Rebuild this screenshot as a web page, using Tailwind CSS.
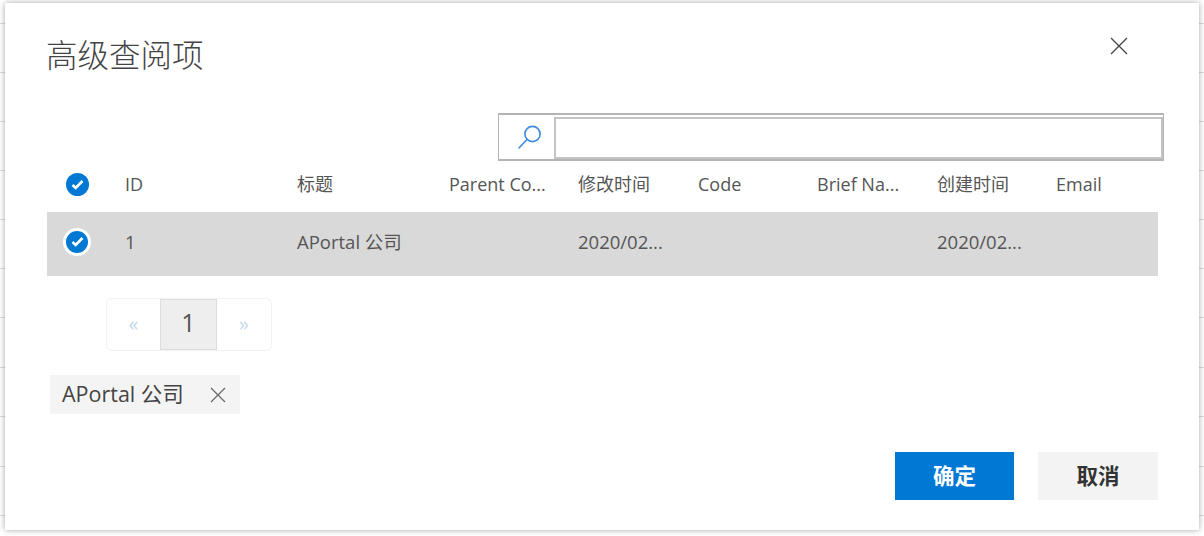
<!DOCTYPE html>
<html lang="zh-CN">
<head>
    <meta charset="UTF-8">
    <meta name="viewport" content="width=device-width, initial-scale=1.0">
    <title>高级查阅项</title>
    <script src="https://cdn.jsdelivr.net/npm/@tailwindcss/browser@4"></script>
</head>
<body class="relative w-[1204px] h-[536px] overflow-hidden bg-white font-['Open_Sans','Noto_Sans_CJK_SC',sans-serif] text-[#333]">
    <!-- Page behind the dialog -->
    <div class="pt-[23px]">
        <div class="h-[49px] border-t border-[#ddd]"></div>
        <div class="h-[49px] border-t border-[#ddd]"></div>
        <div class="h-[49px] border-t border-[#ddd]"></div>
        <div class="h-[49px] border-t border-[#ddd]"></div>
        <div class="h-[49px] border-t border-[#ddd]"></div>
        <div class="h-[49px] border-t border-[#ddd]"></div>
        <div class="h-[50px] border-t border-[#ddd]"></div>
        <div class="h-[49px] border-t border-[#ddd]"></div>
        <div class="h-[50px] border-t border-[#ddd]"></div>
        <div class="h-[49px] border-t border-[#ddd]"></div>
        <div class="h-[21px] border-t border-[#ddd]"></div>
    </div>

    <!-- Dialog -->
    <div class="absolute left-[5px] top-[3px] w-[1194px] h-[527px] bg-white shadow-[0_0_6px_rgba(0,0,0,0.35)] pl-[42px] pr-[41px]">
        <div class="flex justify-between h-[110px]">
            <h2 class="pt-[29px] -ml-[1px] text-[31.5px] leading-[46px] font-light text-[#444]">高级查阅项</h2>
            <button class="mt-[34px] mr-[30px] h-[18px] w-[18px] text-[#444]">
                <svg class="w-[18px] h-[18px]" viewBox="0 0 18 18" fill="none" stroke="currentColor" stroke-width="1.3"><path d="M1 1l16 16M17 1L1 17"/></svg>
            </button>
        </div>

        <!-- Search -->
        <div class="flex justify-end -mr-[6px]">
            <div class="flex w-[666px] h-[48px] border-x border-t-2 border-b-2 border-[#b4b4b4]">
                <div class="w-[55px] flex items-center justify-center pl-[7px] text-[#3c8ae0]">
                    <svg class="w-[26px] h-[26px]" viewBox="0 0 26 26" fill="none" stroke="currentColor" stroke-width="1.6"><circle cx="15.5" cy="10" r="7.6"/><path d="M10 15.5L2 24" stroke-linecap="round"/></svg>
                </div>
                <input type="text" class="flex-1 min-w-0 mt-[2px] border-2 border-[#c4c4c4] bg-white outline-none">
            </div>
        </div>

        <!-- Table -->
        <div class="grid grid-cols-[78px_172px_152px_129px_120px_119px_120px_119px_1fr] items-center h-[51px] pb-[4px] text-[18px] text-[#555]">
            <div class="pl-[19px]">
                <span class="flex items-center justify-center w-[23px] h-[23px] rounded-full bg-[#0078d4] text-white">
                    <svg class="w-[13px] h-[13px]" viewBox="0 0 13 13" fill="none" stroke="currentColor" stroke-width="2.6"><path d="M1.5 7l3.2 3L11.5 3"/></svg>
                </span>
            </div>
            <div>ID</div>
            <div>标题</div>
            <div>Parent Co...</div>
            <div>修改时间</div>
            <div>Code</div>
            <div>Brief Na...</div>
            <div>创建时间</div>
            <div>Email</div>
        </div>
        <div class="grid grid-cols-[78px_172px_152px_129px_120px_119px_120px_119px_1fr] items-center h-[64px] pb-[5px] bg-[#d9d9d9] text-[18.5px] text-[#555]">
            <div class="pl-[16px]">
                <span class="flex items-center justify-center w-[28px] h-[28px] rounded-full border-[3px] border-white bg-[#0078d4] text-white">
                    <svg class="w-[13px] h-[13px]" viewBox="0 0 13 13" fill="none" stroke="currentColor" stroke-width="2.6"><path d="M1.5 7l3.2 3L11.5 3"/></svg>
                </span>
            </div>
            <div>1</div>
            <div>APortal 公司</div>
            <div></div>
            <div>2020/02...</div>
            <div></div>
            <div></div>
            <div>2020/02...</div>
            <div></div>
        </div>

        <!-- Pagination -->
        <div class="flex w-[166px] h-[53px] ml-[59px] mt-[22px] rounded-[6px] border border-[#f2f2f2] text-[#c5d9ee]">
            <div class="w-[53px] flex items-center justify-center pb-[2px] text-[20px]">«</div>
            <div class="w-[57px] flex items-center justify-center pb-[3px] border border-[#ddd] bg-[#eee] text-[25px] text-[#555]">1</div>
            <div class="flex-1 flex items-center justify-center pb-[2px] text-[20px]">»</div>
        </div>

        <!-- Selected tag -->
        <div class="flex items-center w-[190px] h-[39px] ml-[3px] mt-[24px] pl-[12px] bg-[#f4f4f4] text-[21.5px] text-[#444]">
            <span>APortal 公司</span>
            <svg class="ml-[26px] w-[16px] h-[16px] text-[#666]" viewBox="0 0 16 16" fill="none" stroke="currentColor" stroke-width="1.2"><path d="M1 1l14 14M15 1L1 15"/></svg>
        </div>

        <!-- Footer -->
        <div class="flex justify-end gap-[24px] mt-[38px]">
            <button class="w-[119px] h-[48px] pt-[1px] bg-[#0078d4] text-white text-[21.5px] font-bold">确定</button>
            <button class="w-[120px] h-[48px] pt-[1px] bg-[#f3f3f3] text-[#333] text-[21.5px] font-bold">取消</button>
        </div>
    </div>
</body>
</html>
